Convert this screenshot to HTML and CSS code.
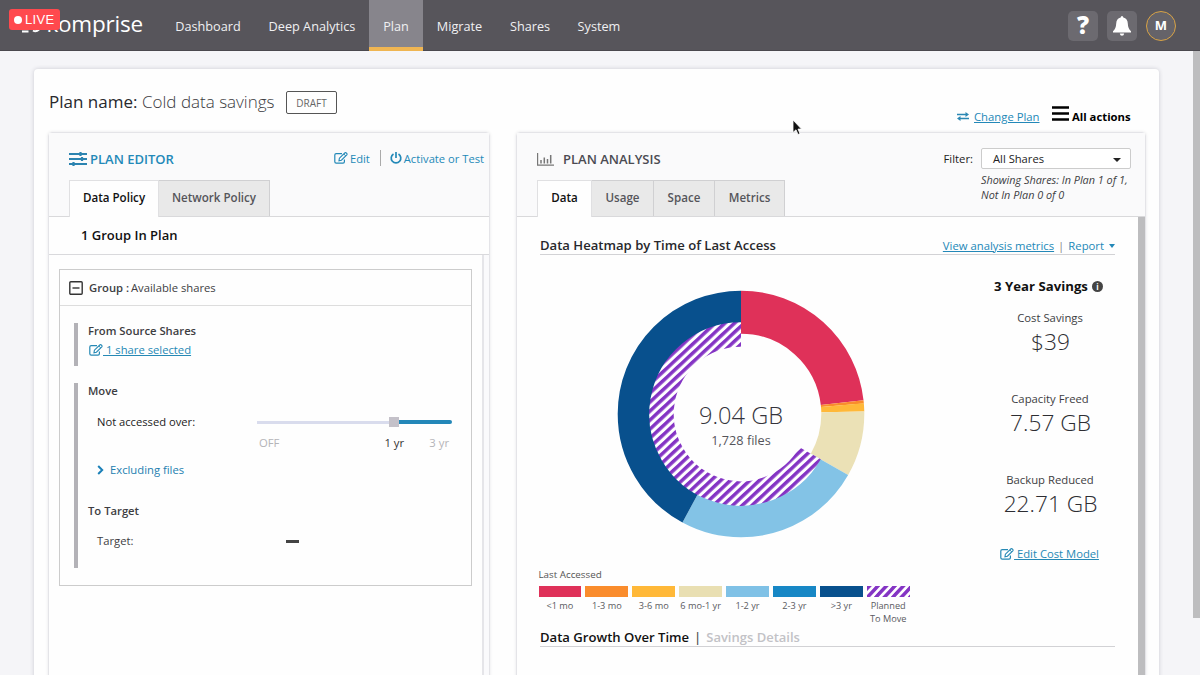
FILE: index.html
```html
<!DOCTYPE html>
<html lang="en">
<head>
<meta charset="utf-8">
<title>Komprise - Plan</title>
<link rel="stylesheet" href="styles.css">
</head>
<body>
<svg width="0" height="0" class="defs">
  <defs>
    <symbol id="edit" viewBox="0 0 14 12"><path d="M8 1.600H2.200Q.8 1.600.8 3v6.800q0 1.400 1.400 1.400H9q1.400 0 1.400-1.400V7.600" fill="none" stroke="currentColor" stroke-width="1.200"/><path d="M5 8.700l.4-2.500L11 .8q.7-.4 1.300.2l.6.6q.4.600-.1 1.200L7.400 8.200z" fill="none" stroke="currentColor" stroke-width="1.100"/><path d="M9.800 2l1.900 1.900" stroke="currentColor"/></symbol>
  </defs>
</svg>
<header class="topbar">
  <div class="logo"><svg width="20" height="14" viewBox="0 0 20 14"><path d="M1 12.500h6.500M12 11.500q3 2 6-1" fill="none" stroke="#fff" stroke-width="2"/></svg><span>komprise</span></div>
  <nav class="nav">
    <a class="n1">Dashboard</a><a class="n2">Deep Analytics</a><a class="n3 active">Plan</a><a class="n4">Migrate</a><a class="n5">Shares</a><a class="n6">System</a>
  </nav>
  <div class="tools">
    <span class="tool"><span class="help">?</span></span>
    <span class="tool"><svg width="20" height="22" viewBox="0 0 20 22"><path d="M10 1q1.300 0 1.300 1.500 4.300 1 4.500 6 .1 5 3.200 7.800v1.200H1v-1.200q3.100-2.800 3.200-7.800.2-5 4.500-6Q8.700 1 10 1zM7.800 18.600h4.400q-.3 2.200-2.200 2.200t-2.200-2.200z" fill="#fff"/></svg></span>
    <span class="avatar">M</span>
  </div>
  <div class="live"><i></i>LIVE</div>
</header>
<main class="page">
  <section class="card">
    <div class="titlebar">
      <h1><span class="pn">Plan name:</span><span class="pv">Cold data savings</span></h1>
      <span class="draft">DRAFT</span>
      <div class="actions">
        <svg width="12" height="9" viewBox="0 0 12 9"><path d="M0 2.500h9M3 6.500h9" stroke="#2b87b3" stroke-width="1.300"/><path d="M8.500 0L12 2.500 8.500 5zM3.500 4L0 6.500 3.500 9z" fill="#2b87b3"/></svg>
        <a class="change">Change Plan</a>
        <svg class="burger" width="17" height="15" viewBox="0 0 17 15"><path d="M0 1.500h17M0 7.500h17M0 13.500h17" stroke="#000" stroke-width="2.600"/></svg>
        <b class="all">All actions</b>
      </div>
    </div>
    <div class="columns">
      <section class="panel editor">
        <div class="phead">
          <div class="ptitle blue">
            <svg width="18" height="16" viewBox="0 0 18 16"><path d="M0 3h18M0 8h18M0 13h18" stroke="#2b83b0" stroke-width="1.800"/><path d="M11.500 1v4M13 6v4M4.500 11v4" stroke="#2b83b0" stroke-width="2.200"/></svg>
            <span class="t-editor">PLAN EDITOR</span>
            <div class="plinks"><svg width="14" height="12"><use href="#edit"/></svg><span class="l-edit">Edit</span><i class="sep"></i><svg width="12" height="12" viewBox="0 0 12 12"><path d="M3.500 2a4.800 4.800 0 1 0 5 0M6 0v6" fill="none" stroke="currentColor" stroke-width="1.700"/></svg><span class="l-act">Activate or Test</span></div>
          </div>
          <div class="tabs"><span class="tab on t1">Data Policy</span><span class="tab t2">Network Policy</span></div>
        </div>
        <div class="groupcount"><span>1 Group In Plan</span></div>
        <div class="editbody">
          <div class="group">
            <div class="ghead"><svg width="14" height="14" viewBox="0 0 14 14"><rect x=".8" y=".8" width="12.400" height="12.400" rx="1" fill="none" stroke="#333" stroke-width="1.400"/><path d="M3.500 7h7" stroke="#333" stroke-width="1.400"/></svg><span class="gl">Group :</span><span class="gv">Available shares</span></div>
            <div class="block source"><h3 class="h-src">From Source Shares</h3><a class="sel"><svg width="14" height="12"><use href="#edit"/></svg><span>&nbsp;1 share selected</span></a></div>
            <div class="block move">
              <h3 class="h-move">Move</h3>
              <div class="access"><span class="a-label">Not accessed over:</span>
                <div class="slider"><div class="rail"><i class="low"></i><i class="knob"></i><i class="high"></i></div><div class="marks"><span>OFF</span><span class="cur">1 yr</span><span>3 yr</span></div></div>
              </div>
              <a class="excl"><svg width="7" height="10" viewBox="0 0 7 10"><path d="M1.200 1L5.200 5l-4 4" fill="none" stroke="#1b80b8" stroke-width="2"/></svg><span>Excluding files</span></a>
              <h3 class="h-to">To Target</h3>
              <div class="target"><span>Target:</span><i></i></div>
            </div>
          </div>
          <div class="track"></div>
        </div>
      </section>
      <section class="panel analysis">
        <div class="phead">
          <div class="atop">
            <div class="ptitle"><svg width="17" height="13" viewBox="0 0 17 13"><path d="M.6 0v12.200H17" fill="none" stroke="#777" stroke-width="1.200"/><path d="M4 7v3.500M7.300 4.500v6M10.500 6v4.500M13.700 2v8.500" stroke="#777" stroke-width="1.500"/></svg><span class="t-analysis">PLAN ANALYSIS</span></div>
            <div class="filter"><span class="f-label">Filter:</span><div><div class="select"><span>All Shares</span><i></i></div><p>Showing Shares: In Plan 1 of 1,<br>Not In Plan 0 of 0</p></div></div>
          </div>
          <div class="tabs"><span class="tab on a1">Data</span><span class="tab a2">Usage</span><span class="tab a3">Space</span><span class="tab a4">Metrics</span></div>
        </div>
        <div class="abody">
          <div class="acontent">
            <div class="sect"><h2 class="h-heat">Data Heatmap by Time of Last Access</h2><div class="slinks"><a class="vam">View analysis metrics</a><i>|</i><span class="rep">Report</span><b></b></div></div>
            <div class="split">
              <div class="chartcol">
                <svg class="donut" width="248" height="248" viewBox="-124 -124 248 248">
                  <defs>
                    <pattern id="hatch" width="6.600" height="6.600" patternUnits="userSpaceOnUse" patternTransform="rotate(47)"><rect width="6.600" height="6.600" fill="#fff"/><rect width="3.500" height="6.600" fill="#8434c4"/></pattern>
                    <pattern id="hatch-key" width="6.200" height="6.200" patternUnits="userSpaceOnUse" patternTransform="rotate(43)"><rect width="6.200" height="6.200" fill="#fff"/><rect width="3.500" height="6.200" fill="#8434c4"/></pattern>
                  </defs>
                  <g fill="none" stroke-width="43" transform="rotate(-90)">
                    <circle r="101.800" pathLength="360" stroke="#df3159" stroke-dasharray="83.500 276.500"/>
                    <circle r="101.800" pathLength="360" stroke="#fa8c2c" stroke-dasharray="1.500 358.500" stroke-dashoffset="-83.500"/>
                    <circle r="101.800" pathLength="360" stroke="#ffb838" stroke-dasharray="3.900 356.100" stroke-dashoffset="-84.900"/>
                    <circle r="101.800" pathLength="360" stroke="#ebe1b6" stroke-dasharray="30.900 329.100" stroke-dashoffset="-88.800"/>
                    <circle r="101.800" pathLength="360" stroke="#83c3e6" stroke-dasharray="88.700 271.300" stroke-dashoffset="-119.700"/>
                    <circle r="101.800" pathLength="360" stroke="#08508d" stroke-dasharray="151.600 208.400" stroke-dashoffset="-208.400"/>
                  </g>
                  <path d="M69.100 39.300A79.500 79.500 0 1 1 0-79.500" fill="none" stroke="url(#hatch)" stroke-width="24.500"/>
                  <text class="total" x="0" y="10" text-anchor="middle">9.04 GB</text>
                  <text class="files" x="0" y="31" text-anchor="middle">1,728 files</text>
                </svg>
                <div class="legend"><h4>Last Accessed</h4>
                  <ul><li><i class="c1"></i>&lt;1 mo</li><li><i class="c2"></i>1-3 mo</li><li><i class="c3"></i>3-6 mo</li><li><i class="c4"></i>6 mo-1 yr</li><li><i class="c5"></i>1-2 yr</li><li><i class="c6"></i>2-3 yr</li><li><i class="c7"></i>&gt;3 yr</li><li><svg width="43" height="11" viewBox="0 0 43 11"><rect width="43" height="11" fill="url(#hatch-key)"/></svg>Planned<br>To Move</li></ul>
                </div>
              </div>
              <aside class="savings">
                <h3>3 Year Savings<span class="info">i</span></h3>
                <dl><dt class="d1">Cost Savings</dt><dd>$39</dd><dt class="d2">Capacity Freed</dt><dd>7.57 GB</dd><dt class="d3">Backup Reduced</dt><dd>22.71 GB</dd></dl>
                <a class="model"><svg width="14" height="12"><use href="#edit"/></svg><span>&nbsp;Edit Cost Model</span></a>
              </aside>
            </div>
            <div class="sect growth"><h2 class="h-grow">Data Growth Over Time</h2><i>|</i><span>Savings Details</span></div>
          </div>
          <div class="ascroll"></div>
        </div>
      </section>
    </div>
  </section>
  <div class="pagescroll"></div>
</main>
<svg class="cursor" width="10" height="17" viewBox="0 0 10 17"><path d="M1 1v12.500l3-2.700 2 4.700 2-.9-2-4.500h3.500z" fill="#111" stroke="#fff" stroke-width=".8"/></svg>
</body>
</html>
```
FILE: styles.css
```css
* { box-sizing: border-box; }
body { margin: 0; width: 1200px; height: 675px; overflow: hidden; background: #f5f5f8; font-family: "Open Sans", "Noto Sans", sans-serif; font-size: 11px; color: #3d3d42; white-space: nowrap; position: relative; }
h1, h2, h3, h4, p, ul, dl, dd { margin: 0; padding: 0; font-weight: 400; }
i { font-style: normal; }
svg { display: block; flex: none; }
.defs { position: absolute; }

.topbar { height: 51px; background: #57555b; display: flex; position: relative; border-bottom: 1px solid #4a484e; }
.logo { width: 161px; padding-right: 18px; display: flex; align-items: flex-start; justify-content: flex-end; gap: 5px; color: #fff; font-size: 22.500px; line-height: 47px; letter-spacing: -.2px; }
.logo svg { margin-top: 19px; }
.live { position: absolute; left: 9px; top: 9px; width: 51px; height: 21px; border-radius: 3px; background: #ff494e; color: #fff; font: 13px/21px "Liberation Sans", sans-serif; display: flex; align-items: center; padding-left: 5px; gap: 3px; letter-spacing: .3px; }
.live i { width: 8px; height: 8px; border-radius: 50%; background: #fff; }
.nav { display: flex; flex: 1; }
.nav a { height: 51px; text-align: center; line-height: 52px; font-size: 12.700px; color: #f0f0f2; }
.n1 { width: 94px; } .n2 { width: 114px; } .n3 { width: 54px; } .n4 { width: 73px; } .n5 { width: 68px; } .n6 { width: 70px; }
.nav .active { background: #87858c; border-bottom: 4px solid #efb552; }
.tools { display: flex; gap: 9px; padding: 11px 24px 0 0; }
.tool { width: 30px; height: 30px; border-radius: 5px; background: #6c6a70; color: #fff; display: flex; align-items: center; justify-content: center; }
.help { font-size: 24px; font-weight: 800; line-height: 24px; padding-bottom: 2px; }
.avatar { width: 30px; height: 30px; border-radius: 50%; border: 1.500px solid #d9a345; background: #656369; color: #fff; font-size: 13px; font-weight: 700; text-align: center; line-height: 27px; }

.page { display: flex; justify-content: space-between; height: 624px; padding-left: 34px; }
.card { margin-top: 18px; width: 1125px; height: 620px; background: #fefefe; border-radius: 4px; box-shadow: 0 0 4px rgba(60,60,80,.22); padding-left: 14px; }
.pagescroll { width: 7px; height: 567px; background: #bdbdbf; }
.titlebar { height: 63px; display: flex; position: relative; }
h1 { font-size: 17px; line-height: 24px; padding-top: 21px; display: flex; width: 238px; color: #28282c; }
.pn { width: 93px; margin-left: 1px; }
.pv { font-weight: 300; color: #3a3a40; }
.draft { margin-top: 22px; width: 51px; height: 23px; border: 1px solid #555; border-radius: 2px; text-align: center; line-height: 22px; font-size: 10px; color: #666; }
.actions { margin-left: auto; display: flex; align-items: center; height: 20px; margin-top: 37px; padding-right: 27px; color: #000; }
.change { margin-left: 5px; width: 78px; font-size: 11.300px; color: #2388b8; text-decoration: underline; }
.burger { margin-top: -6px; }
.all { margin-left: 3px; width: 60px; font-size: 11.300px; font-weight: 700; }
.columns { display: flex; gap: 26px; }
.panel { height: 560px; border: 1px solid #e4e4e8; border-radius: 4px 4px 0 0; box-shadow: 0 0 3px rgba(80,80,100,.15); }
.editor { width: 442px; }
.analysis { width: 630px; }
.phead { height: 84px; background: #fafafb; border-bottom: 1px solid #d9d9db; }
.ptitle { height: 47px; padding: 5px 0 0 20px; display: flex; align-items: center; font-size: 13px; font-weight: 600; color: #4b4b52; }
.blue { color: #2389b8; }
.t-editor { margin-left: 3px; }
.plinks { margin-left: auto; display: flex; align-items: center; font-size: 11.200px; font-weight: 400; padding: 0 5px 2px 0; }
.l-edit { margin-left: 2px; }
.sep { width: 1px; height: 16px; background: #aaa; margin: 0 9px 0 10px; }
.l-act { margin-left: 2px; }
.tabs { display: flex; height: 37px; padding-left: 20px; }
.tab { border: 1px solid #d0d0d2; border-left: 0; border-bottom: 0; background: #e9e9e9; height: 36px; line-height: 34px; text-align: center; font-size: 11.600px; font-weight: 600; color: #55555a; }
.tab.on { background: #fefefe; color: #111; height: 37px; border-color: #e0e0e2; border-left: 1px solid #e0e0e2; }
.t1 { width: 90px; } .t2 { width: 111px; }
.a1 { width: 55px; } .a2 { width: 62px; } .a3 { width: 61px; } .a4 { width: 70px; }
.groupcount { height: 38px; border-bottom: 1px solid #d9d9dc; padding-left: 32px; font-size: 13px; font-weight: 600; line-height: 37px; color: #111; }
.editbody { display: flex; justify-content: space-between; height: 440px; padding-left: 10px; }
.group { width: 413px; height: 317px; margin-top: 14px; border: 1px solid #ccc; }
.track { width: 7px; border-left: 2px solid #e5e5e9; background: #fafafc; }
.ghead { height: 36px; border-bottom: 1px solid #ddd; display: flex; align-items: center; padding-left: 9px; font-size: 11.250px; }
.gl { margin-left: 6px; width: 42px; font-weight: 600; }
.block { margin-left: 14px; border-left: 4px solid #b3b2b7; padding-left: 10px; }
.block h3 { font-size: 11.250px; font-weight: 600; line-height: 16px; }
.source { margin-top: 17px; height: 43px; }
.sel, .model { display: flex; align-items: center; line-height: 16px; margin-top: 3px; margin-left: 1px; font-size: 11.250px; color: #2689b5; }
.sel span, .model span { text-decoration: underline; }
.move { margin-top: 17px; height: 185px; }
.access { display: flex; padding: 15px 0 0 9px; height: 64px; }
.a-label { width: 160px; font-size: 11.200px; line-height: 16px; color: #222; }
.slider { width: 195px; }
.rail { display: flex; align-items: center; height: 16px; }
.low { width: 132px; height: 3px; background: #d9dced; }
.knob { width: 10px; height: 10px; background: #c4c1c9; }
.high { flex: 1; height: 4px; background: #2387b8; border-radius: 0 2px 2px 0; }
.marks { display: flex; font-size: 11.300px; line-height: 16px; margin-top: 5px; padding: 0 3px 0 2px; color: #b4b4b8; }
.marks .cur { margin-left: 105px; margin-right: auto; color: #333; }
.excl { display: flex; align-items: center; padding-left: 9px; line-height: 16px; margin-top: -1px; font-size: 11.250px; color: #2480b0; gap: 6px; }
.block .h-to { margin-top: 25px; }
.target { display: flex; align-items: center; padding-left: 9px; margin-top: 14px; font-size: 11.250px; line-height: 16px; }
.target span { width: 189px; }
.target i { width: 13px; height: 3px; background: #444; }

.atop { display: flex; justify-content: space-between; height: 47px; }
.t-analysis { margin-left: 9px; }
.filter { display: flex; padding: 15px 14px 0 0; }
.f-label { margin-right: 8px; line-height: 22px; font-size: 11.300px; color: #222; }
.select { width: 150px; height: 21px; border: 1px solid #ccc; border-radius: 2px; background: #fff; display: flex; align-items: center; justify-content: space-between; padding: 0 9px 0 11px; font-size: 11.200px; line-height: 19px; color: #222; }
.select i { margin-top: 3px; border: 4px solid transparent; border-top-color: #222; border-bottom: 0; }
.filter p { font-size: 10.850px; font-style: italic; line-height: 15px; margin-top: 3px; }
.abody { display: flex; height: 460px; justify-content: space-between; }
.acontent { width: 598px; padding-left: 23px; }
.ascroll { width: 7px; background: #bdbdbf; }
.sect { height: 38px; border-bottom: 1px solid #d2d2d5; display: flex; align-items: center; padding-top: 19px; }
.h-heat, .h-grow { font-size: 13.100px; font-weight: 600; color: #28282c; line-height: 18px; }
.slinks { margin-left: auto; display: flex; align-items: center; font-size: 11.300px; color: #2388b8; }
.vam { text-decoration: underline; }
.slinks i { margin: 0 4px; color: #888; }
.slinks b { margin: 2px 0 0 5px; border: 3.500px solid transparent; border-top: 4px solid #2388b8; border-bottom: 0; }
.split { display: flex; justify-content: space-between; height: 372px; }
.chartcol { width: 400px; }
.donut { margin: 35px 0 0 77px; }
.total { font-size: 23.600px; font-weight: 300; fill: #34343c; }
.files { font-size: 12.700px; fill: #55555b; }
.legend { margin: 30px 0 0 -1.500px; }
.legend h4 { font-size: 9.800px; line-height: 13px; color: #555; }
.legend ul { display: flex; gap: 4px; list-style: none; margin-top: 5px; }
.legend li { width: 42.900px; text-align: center; font-size: 9.200px; line-height: 12.500px; color: #5a5a60; }
.legend li i, .legend li svg { display: block; height: 11px; margin-bottom: 3px; }
.c1 { background: #df3159; } .c2 { background: #fa8c2c; } .c3 { background: #ffb838; } .c4 { background: #e9dfb2; } .c5 { background: #7fc1e6; } .c6 { background: #1787c5; } .c7 { background: #08508d; }
.savings { width: 130px; padding-top: 22px; text-align: center; }
.savings h3 { font-size: 13.200px; font-weight: 700; line-height: 18px; color: #111; display: flex; align-items: center; justify-content: center; padding-right: 3px; }
.info { width: 11px; height: 11px; border-radius: 50%; background: #444; color: #fff; font-size: 8px; line-height: 11px; font-weight: 700; margin-left: 4px; }
.savings dl { padding-top: 14px; }
dt { font-size: 11.300px; line-height: 17px; }
dd { font-size: 22.700px; font-weight: 300; line-height: 30px; margin: 1px 0 33px 1px; color: #2d2d32; }
.model { justify-content: center; margin-top: -6px; margin-left: -1px; }
.growth { height: 20px; padding: 0; gap: 5px; font-size: 13px; font-weight: 600; color: #555; }
.growth span { color: #c2c2c6; }
.growth .h-grow { color: #111; }
.cursor { position: absolute; left: 792px; top: 119px; }
```
